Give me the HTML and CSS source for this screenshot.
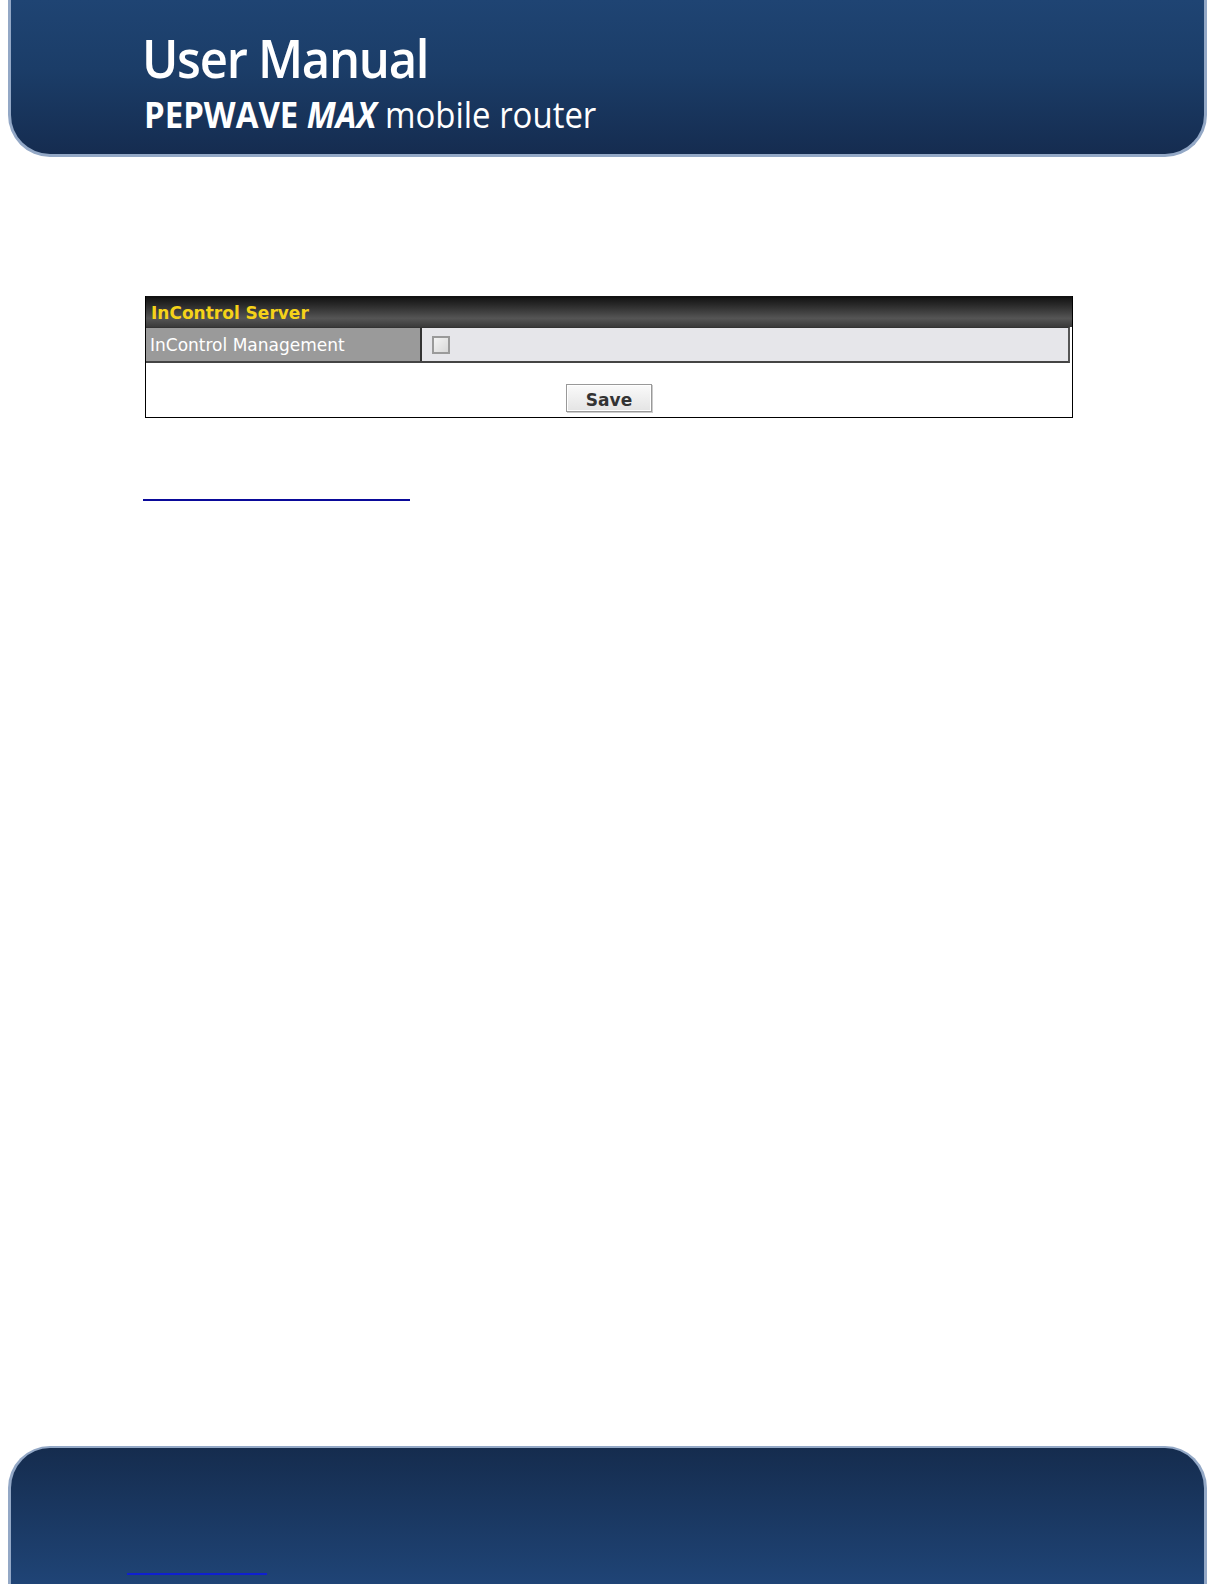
FILE: index.html
```html
<!DOCTYPE html>
<html>
<head>
<meta charset="utf-8">
<link rel="stylesheet" href="styles.css">
</head>
<body>
<div class="page">
  <header class="banner">
    <div class="title">User Manual</div>
    <div class="subtitle"><b>PEPWAVE</b> <b><i>MAX</i></b> mobile router</div>
  </header>
  <main class="content">
    <div class="panel">
      <div class="panel-head">InControl Server</div>
      <div class="row">
        <div class="label">InControl Management</div>
        <div class="value"><span class="check"></span></div>
      </div>
      <div class="actions"><button class="save">Save</button></div>
    </div>
    <div class="rule"></div>
  </main>
  <footer class="foot">
    <div class="foot-link"></div>
  </footer>
</div>
</body>
</html>
```
FILE: styles.css
```css
html, body { margin: 0; padding: 0; background: #fff; overflow: hidden; }
.page { height: 1584px; overflow: hidden; display: flex; flex-direction: column; }
.banner {
  margin: 0 17px 0 8px; height: 154px;
  background: linear-gradient(#1f4473 0%, #1b3d68 45%, #152c50 100%);
  border: 3px solid #93a8c6; border-top: none;
  border-radius: 0 0 42px 42px;
  display: flex; flex-direction: column;
  font-family: "Open Sans", "Noto Sans", sans-serif; color: #fff;
}
.title { margin: 28px 0 0 131px; font-size: 53px; line-height: 60px; font-weight: 600; letter-spacing: -1.4px; transform: scaleX(0.925); transform-origin: left; white-space: nowrap; }
.subtitle { margin: 5px 0 0 133px; font-size: 36px; line-height: 44px; transform: scaleX(0.915); transform-origin: left; white-space: nowrap; }
.subtitle b { font-weight: 700; }
.content { flex: 1; padding: 139px 0 0 145px; }
.panel { width: 926px; border: 1px solid #000; border-top: none; }
.panel-head {
  height: 31px; box-sizing: border-box; padding: 5px 0 0 5px;
  background: linear-gradient(#151515 0%, #2a2a2a 25%, #555 70%, #3a3a3a 100%);
  border-top: 2px solid #111;
  font-family: "DejaVu Sans", Verdana, sans-serif; font-weight: 700; font-size: 17px; color: #f5d219; line-height: 21px;
}
.row { display: flex; height: 36px; border-top: 1px solid #333; border-bottom: 2px solid #444; border-right: 2px solid #555; box-sizing: border-box; margin-right: 2px; }
.label {
  width: 276px; background: #9a9a9a; color: #fff; border-right: 2px solid #333;
  font-family: "DejaVu Sans", Verdana, sans-serif; font-size: 17px; line-height: 34px; padding-left: 4px; box-sizing: border-box;
}
.value { flex: 1; background: #e6e6ea; display: flex; align-items: center; padding-left: 10px; }
.check { width: 14px; height: 14px; border: 2px solid #9a9a9a; background: linear-gradient(135deg, #f4f4f4, #d8d8d8); }
.actions { display: flex; justify-content: center; padding: 21px 0 5px; }
.save {
  width: 86px; height: 28px; padding: 4px 0 0;
  font-family: "DejaVu Sans", Verdana, sans-serif; font-weight: 700; font-size: 17px; color: #333;
  background: linear-gradient(#fafafa, #e4e4e4); border: 1px solid #999; box-shadow: inset 0 0 0 1px #fff, 1px 1px 0 #ccc;
}
.rule { width: 267px; height: 2px; background: #0a0a9a; margin: 81px 0 0 -2px; }
.foot {
  margin: 0 17px 0 8px; height: 136px;
  background: linear-gradient(#152c4e 0%, #1a3862 50%, #1f4476 100%);
  border: 3px solid #93a8c6; border-bottom: none; border-top-width: 2px;
  border-radius: 42px 42px 0 0;
  display: flex; flex-direction: column; justify-content: flex-end;
}
.foot-link { width: 140px; height: 2px; background: #1020d0; margin: 0 0 9px 116px; }
```
